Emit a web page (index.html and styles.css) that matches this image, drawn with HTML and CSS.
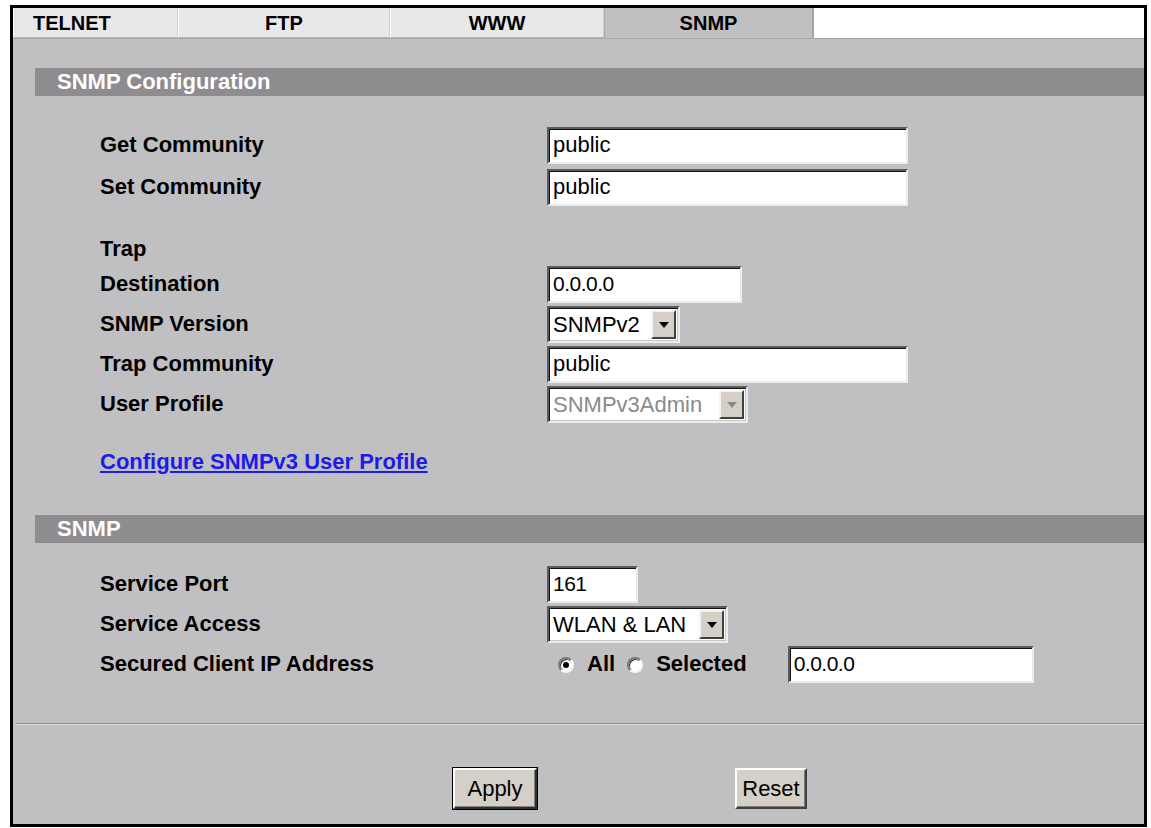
FILE: index.html
```html
<!DOCTYPE html>
<html>
<head>
<meta charset="utf-8">
<link rel="stylesheet" href="styles.css">
</head>
<body>
<div class="frame">
  <div class="tabs">
    <div class="tab tab-telnet">TELNET</div>
    <div class="tab tab-ftp">FTP</div>
    <div class="tab tab-www">WWW</div>
    <div class="tab tab-snmp active">SNMP</div>
    <div class="tab-fill"></div>
  </div>
  <div class="content">
    <div class="section-head">SNMP Configuration</div>
    <div class="form">
      <div class="row row-get">
        <div class="label">Get Community</div>
        <input class="field w-long" type="text" value="public">
      </div>
      <div class="row row-set">
        <div class="label">Set Community</div>
        <input class="field w-long" type="text" value="public">
      </div>
      <div class="row row-trap">
        <div class="label">Trap</div>
      </div>
      <div class="row">
        <div class="label">Destination</div>
        <input class="field field-narrow w-dest" type="text" value="0.0.0.0">
      </div>
      <div class="row">
        <div class="label">SNMP Version</div>
        <div class="select w-ver"><span class="sel-text">SNMPv2</span><span class="sel-btn"><span class="tri"></span></span></div>
      </div>
      <div class="row">
        <div class="label">Trap Community</div>
        <input class="field w-long" type="text" value="public">
      </div>
      <div class="row">
        <div class="label">User Profile</div>
        <div class="select w-user disabled"><span class="sel-text">SNMPv3Admin</span><span class="sel-btn"><span class="tri"></span></span></div>
      </div>
      <div class="link-row"><a class="link" href="#">Configure SNMPv3 User Profile</a></div>
    </div>
    <div class="section-head head2">SNMP</div>
    <div class="form form2">
      <div class="row">
        <div class="label">Service Port</div>
        <input class="field field-narrow w-port" type="text" value="161">
      </div>
      <div class="row">
        <div class="label">Service Access</div>
        <div class="select w-access"><span class="sel-text">WLAN &amp; LAN</span><span class="sel-btn"><span class="tri"></span></span></div>
      </div>
      <div class="row">
        <div class="label">Secured Client IP Address</div>
        <div class="radios">
          <span class="radio checked"><span class="dot"></span></span>
          <span class="radio-label">All</span>
          <span class="radio"></span>
          <span class="radio-label">Selected</span>
          <input class="field field-narrow w-ip" type="text" value="0.0.0.0">
        </div>
      </div>
    </div>
    <div class="rule"></div>
    <div class="buttons">
      <button class="btn btn-default" type="button">Apply</button>
      <button class="btn btn-reset" type="button">Reset</button>
    </div>
  </div>
</div>
</body>
</html>
```

FILE: styles.css
```css
html, body {
  margin: 0;
  padding: 0;
  background: #ffffff;
}
body {
  font-family: "Liberation Sans", Arial, sans-serif;
  color: #000;
}
.frame {
  margin: 5px 0 0 10px;
  width: 1137px;
  height: 822px;
  box-sizing: border-box;
  border: 3px solid #000;
  display: flex;
  flex-direction: column;
  background: #c0bfc2;
}
.tabs {
  display: flex;
  height: 30px;
  flex: none;
  background: #fff;
}
.tab {
  box-sizing: border-box;
  height: 30px;
  background: #e8e8ea;
  font-weight: bold;
  font-size: 20px;
  line-height: 30px;
  text-align: center;
  border-left: 1px solid #fafafa;
  border-right: 1px solid #d2d2d4;
  border-bottom: 1px solid #b4b4b6;
}
.tab-telnet { width: 165px; text-align: left; padding-left: 19px; }
.tab-ftp { width: 212px; }
.tab-www { width: 214px; }
.tab-snmp { width: 210px; }
.tab.active {
  background: #c0bfc2;
  border-left: 1px solid #a8a8aa;
  border-right: 2px solid #a4a4a6;
  border-bottom: none;
}
.tab-fill {
  flex: 1;
  background: #fff;
}
.content {
  flex: 1;
  border-top: 1px solid #a6a6a8;
  padding-top: 29px;
  display: flex;
  flex-direction: column;
}
.section-head {
  margin-left: 22px;
  height: 28px;
  line-height: 28px;
  padding-left: 22px;
  background: #8e8c8f;
  color: #fff;
  font-weight: bold;
  font-size: 22px;
}
.head2 { margin-top: 40px; }
.form {
  padding-left: 87px;
  display: flex;
  flex-direction: column;
}
.row {
  display: flex;
  align-items: center;
  height: 40px;
}
.row-get { margin-top: 29px; }
.row-set { margin-top: 2px; }
.row-trap { margin-top: 27px; height: 30px; }
.form2 { margin-top: 21px; }
.label {
  width: 447px;
  flex: none;
  font-weight: bold;
  font-size: 22px;
}
.field {
  box-sizing: border-box;
  height: 37px;
  margin: 0;
  padding: 0 0 0 4px;
  background: #fff;
  border-style: solid;
  border-width: 2px;
  border-color: #5c5c5c #ececec #ececec #5c5c5c;
  box-shadow: inset 1px 1px 0 #111;
  font-family: "Liberation Sans", Arial, sans-serif;
  font-size: 22px;
  color: #000;
  outline: none;
}
.field-narrow { font-size: 21px; letter-spacing: -0.5px; }
.w-long { width: 361px; }
.w-dest { width: 195px; }
.w-port { width: 91px; }
.w-ip { width: 246px; margin-left: 29px; }
.select {
  box-sizing: border-box;
  height: 37px;
  display: flex;
  align-items: stretch;
  background: #fff;
  border-style: solid;
  border-width: 2px;
  border-color: #5c5c5c #ececec #ececec #5c5c5c;
  box-shadow: inset 1px 1px 0 #111, inset -1px -1px 0 #c8c8c8;
  padding: 2px 2px 2px 0;
}
.w-ver { width: 133px; }
.w-user { width: 201px; }
.w-access { width: 181px; }
.sel-text {
  flex: 1;
  padding-left: 4px;
  font-size: 22px;
  line-height: 29px;
  white-space: nowrap;
  overflow: hidden;
}
.sel-btn {
  width: 25px;
  flex: none;
  box-sizing: border-box;
  background: #d4d0c8;
  border-style: solid;
  border-width: 2px;
  border-color: #f4f4f4 #404040 #404040 #f4f4f4;
  display: flex;
  align-items: center;
  justify-content: center;
}
.tri {
  width: 0;
  height: 0;
  border-left: 5px solid transparent;
  border-right: 5px solid transparent;
  border-top: 6px solid #000;
  margin-top: 2px;
}
.disabled .sel-text { color: #8a8a8a; }
.disabled .tri { border-top-color: #8a8a8a; }
.link-row {
  margin-top: 25px;
  height: 26px;
  line-height: 26px;
}
.link {
  color: #1c1ce6;
  font-weight: bold;
  font-size: 22px;
  text-decoration: underline;
}
.radios {
  display: flex;
  align-items: center;
  padding-left: 11px;
}
.radio {
  width: 16px;
  height: 16px;
  box-sizing: border-box;
  border-radius: 50%;
  background: #fff;
  border: 2px solid;
  border-color: #7a7a7a #f6f6f6 #f6f6f6 #7a7a7a;
  box-shadow: inset 1px 1px 0 #303030;
  display: flex;
  align-items: center;
  justify-content: center;
  margin-top: 2px;
}
.dot {
  width: 6px;
  height: 6px;
  border-radius: 50%;
  background: #000;
}
.radio-label {
  font-weight: bold;
  font-size: 22px;
  margin-left: 13px;
  margin-right: 12px;
}
.rule {
  margin-top: 39px;
  margin-left: 3px;
  height: 1px;
  background: #8a8a8c;
  border-bottom: 1px solid #dcdcde;
}
.buttons {
  margin-top: 43px;
  display: flex;
  padding-left: 440px;
}
.btn {
  box-sizing: border-box;
  height: 41px;
  margin: 0;
  padding: 0;
  background: #d4d0c8;
  font-family: "Liberation Sans", Arial, sans-serif;
  font-size: 22px;
  color: #000;
  border-style: solid;
  border-width: 2px;
  border-color: #ffffff #404040 #404040 #ffffff;
  box-shadow: inset -1px -1px 0 #808080;
}
.btn-default {
  width: 84px;
  outline: 1px solid #000;
  border-color: #ffffff #303030 #303030 #ffffff;
}
.btn-reset {
  width: 72px;
  margin-left: 198px;
}
```
